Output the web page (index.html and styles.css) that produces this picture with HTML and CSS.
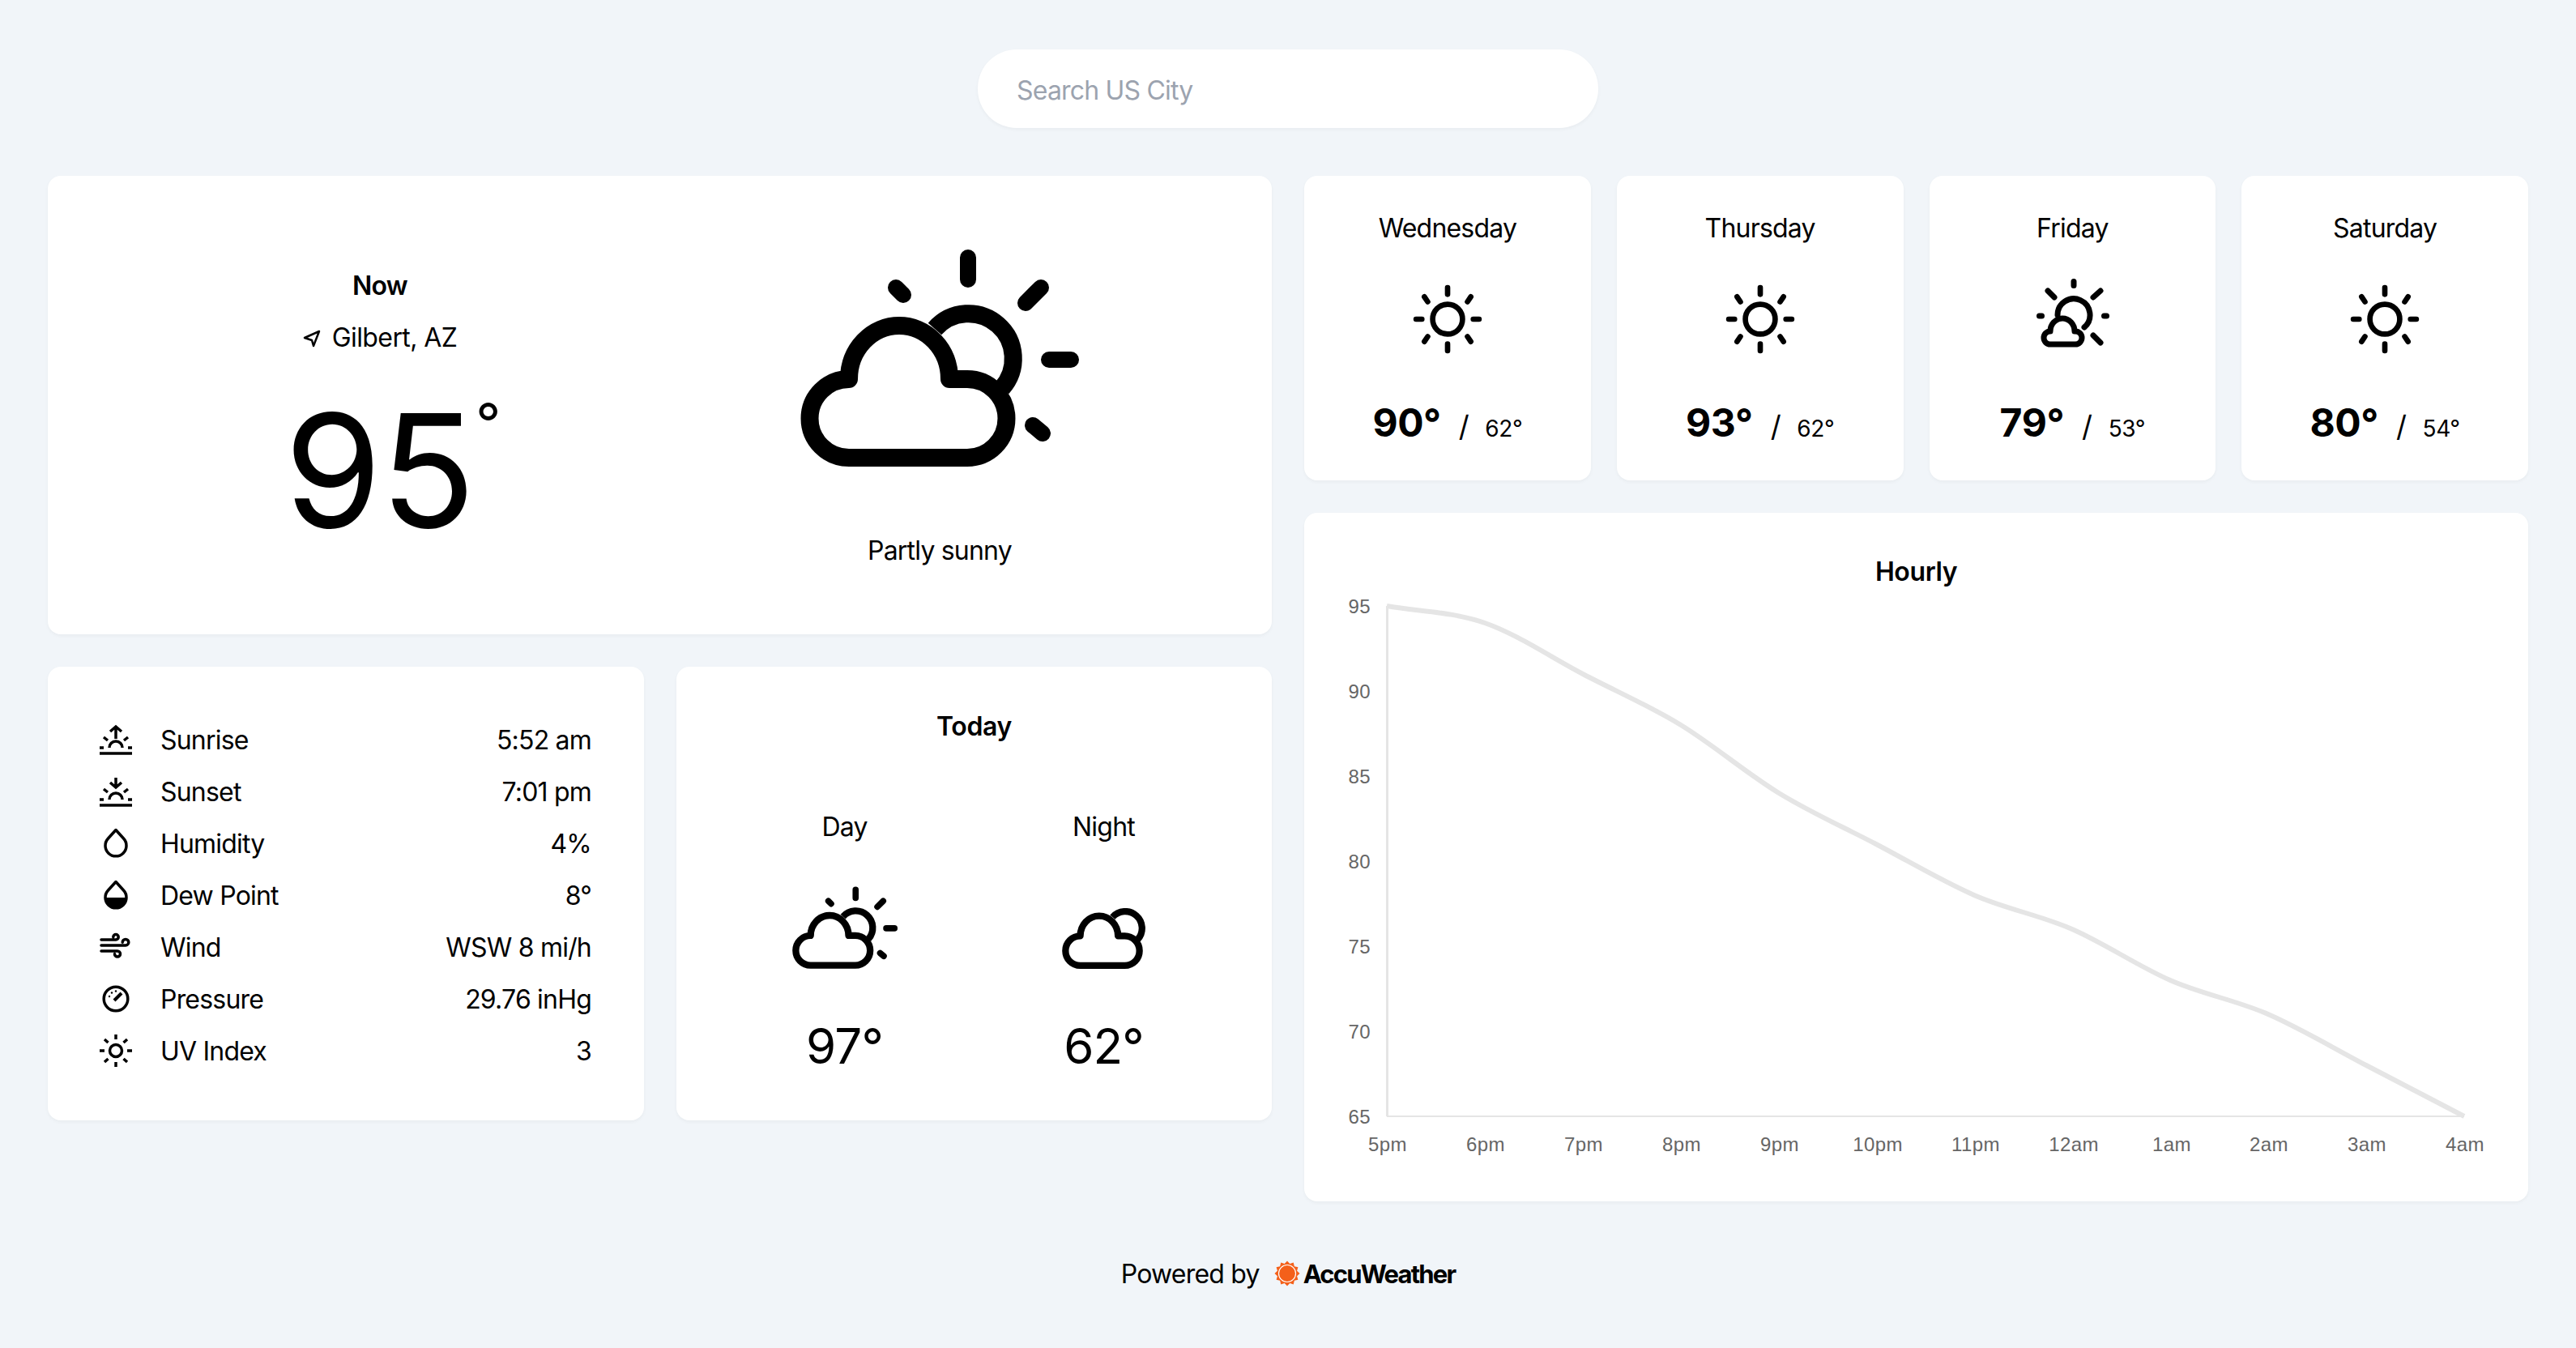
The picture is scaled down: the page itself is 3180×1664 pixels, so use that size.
FILE: index.html
```html
<!DOCTYPE html>
<html lang="en">
<head>
  <meta charset="UTF-8" />
  <title>Weather</title>
  <link rel="stylesheet" href="styles.css">
</head>
<body>
  <svg class="sprites" width="0" height="0">
    <symbol id="cloud-sun" viewBox="0 0 344 270">
      <g fill="none" stroke="#000" stroke-width="22" stroke-linecap="round" stroke-linejoin="round">
        <path d="M166 98A55 55 0 1 1 249 171" stroke-linecap="butt"/>
        <path d="M60 257a48.5 48.5 0 0 1 0-97A62 66 0 0 1 184 160h22a48.5 48.5 0 0 1 0 97z" fill="#fff"/>
      </g>
      <g fill="none" stroke="#000" stroke-width="20" stroke-linecap="round">
        <path d="M207 10V37M278 66l19-19M118 47l9 9M307 136h27M287 217l12 10"/>
      </g>
    </symbol>
    <symbol id="night" viewBox="0 69 274 201">
      <g fill="none" stroke="#000" stroke-width="22" stroke-linejoin="round">
        <path d="M166 98A55 55 0 1 1 249 171"/>
        <path d="M60 257a48.5 48.5 0 0 1 0-97A62 66 0 0 1 184 160h22a48.5 48.5 0 0 1 0 97z" fill="#fff"/>
      </g>
    </symbol>
    <symbol id="sun" viewBox="0 0 86 86">
      <circle cx="43" cy="43" r="18" fill="none" stroke="#000" stroke-width="6.5"/>
      <path d="M43 5V13M43 73V81M5 43H12M74 43H81M15 16l4 6M71 16l-4 6M15 70l4-6M71 70l-4-6" stroke="#000" stroke-width="6.5" stroke-linecap="round"/>
    </symbol>
    <symbol id="sun-cloud" viewBox="0 0 95 87">
      <g fill="none" stroke="#000" stroke-width="7" stroke-linecap="round" stroke-linejoin="round">
        <path d="M49 5.500V10.500M6.500 48H9.500M86.500 48H89.500M17 17l8 8M82 17l-9 8M73 72l9 9"/>
        <path d="M29 47A20 20 0 1 1 62 62"/>
        <path d="M20 83a8 8 0 0 1 0-16A15 16 0 0 1 50 67h1a8 8 0 0 1 0 16z" fill="#fff"/>
      </g>
    </symbol>
  </svg>

  <div class="search">
    <input type="text" placeholder="Search US City">
  </div>

  <div class="dashboard">
    <div class="left-col">
      <div class="card now-card">
        <div class="now-left">
          <div class="now-title">Now</div>
          <div class="now-place">
            <svg width="22" height="24" viewBox="0 0 22 24"><path d="M20 4L2 12l9 3 2 7z" fill="none" stroke="#000" stroke-width="2.500" stroke-linejoin="round"/></svg>
            Gilbert, AZ
          </div>
          <div class="now-temp">95<span class="deg">°</span></div>
        </div>
        <div class="now-right">
          <svg class="now-icon"><use href="#cloud-sun"/></svg>
          <div class="now-text">Partly sunny</div>
        </div>
      </div>

      <div class="lower-row">
        <div class="card details-card">
          <div class="detail-row">
            <svg class="detail-icon" viewBox="0 -2 40 40"><path d="M0 35H40M0 28H5M35 28H40M5 15l5 4M35 15l-5 4M12 28a8 8 0 0 1 16 0M20 17V2M13 8l7-6 7 6" fill="none" stroke="#000" stroke-width="3.500"/></svg>
            <span class="detail-name">Sunrise</span><span class="detail-value">5:52 am</span>
          </div>
          <div class="detail-row">
            <svg class="detail-icon" viewBox="0 -2 40 40"><path d="M0 35H40M0 28H5M35 28H40M5 15l5 4M35 15l-5 4M12 28a8 8 0 0 1 16 0M20 1V13M13 7l7 6 7-6" fill="none" stroke="#000" stroke-width="3.500"/></svg>
            <span class="detail-name">Sunset</span><span class="detail-value">7:01 pm</span>
          </div>
          <div class="detail-row">
            <svg class="detail-icon" viewBox="0 0 40 40"><path d="M20 3.500L10.500 14A13 13 0 1 0 29.500 14Z" fill="none" stroke="#000" stroke-width="3.500" stroke-linejoin="round"/></svg>
            <span class="detail-name">Humidity</span><span class="detail-value">4%</span>
          </div>
          <div class="detail-row">
            <svg class="detail-icon" viewBox="0 0 40 40"><path d="M20 3.500L10.500 14A13 13 0 1 0 29.500 14Z" fill="none" stroke="#000" stroke-width="3.500" stroke-linejoin="round"/><path d="M7 23H33A13 13 0 0 1 7 23Z"/></svg>
            <span class="detail-name">Dew Point</span><span class="detail-value">8°</span>
          </div>
          <div class="detail-row">
            <svg class="detail-icon" viewBox="0 0 40 38"><path d="M2 10H20a3.200 3.200 0 1 0-3.200-3.200M2 17H32a3.800 3.800 0 1 0-3.800-3.800M2 24H22a3.500 3.500 0 1 1-3.500 3.500" fill="none" stroke="#000" stroke-width="3.500" stroke-linecap="round"/></svg>
            <span class="detail-name">Wind</span><span class="detail-value">WSW 8 mi/h</span>
          </div>
          <div class="detail-row">
            <svg class="detail-icon" viewBox="0 0 40 38"><circle cx="20" cy="19" r="14.800" fill="none" stroke="#000" stroke-width="3.500"/><path d="M18 21l9-9" stroke="#000" stroke-width="4"/><circle cx="12" cy="16" r="1.200"/><circle cx="15" cy="11.500" r="1.200"/><circle cx="20" cy="9.500" r="1.200"/></svg>
            <span class="detail-name">Pressure</span><span class="detail-value">29.76 inHg</span>
          </div>
          <div class="detail-row">
            <svg class="detail-icon" viewBox="0 0 40 40"><circle cx="20" cy="20" r="7.500" fill="none" stroke="#000" stroke-width="3.500"/><path d="M20 0V6M20 34V40M0 20H6M34 20H40M6 6l4.500 4M34 6l-4.500 4M6 34l4.500-4M34 34l-4.500-4" stroke="#000" stroke-width="3.500"/></svg>
            <span class="detail-name">UV Index</span><span class="detail-value">3</span>
          </div>
        </div>

        <div class="card today-card">
          <div class="card-title">Today</div>
          <div class="today-cols">
            <div class="today-col">
              <div class="today-label">Day</div>
              <div class="today-icon"><svg class="icon-day"><use href="#cloud-sun"/></svg></div>
              <div class="today-temp">97°</div>
            </div>
            <div class="today-col">
              <div class="today-label">Night</div>
              <div class="today-icon"><svg class="icon-night"><use href="#night"/></svg></div>
              <div class="today-temp">62°</div>
            </div>
          </div>
        </div>
      </div>
    </div>

    <div class="right-col">
      <div class="days">
        <div class="card day-card">
          <div class="day-name">Wednesday</div>
          <div class="day-icon"><svg class="icon-sun"><use href="#sun"/></svg></div>
          <div class="day-temps"><b>90°</b><i>/</i><small>62°</small></div>
        </div>
        <div class="card day-card">
          <div class="day-name">Thursday</div>
          <div class="day-icon"><svg class="icon-sun"><use href="#sun"/></svg></div>
          <div class="day-temps"><b>93°</b><i>/</i><small>62°</small></div>
        </div>
        <div class="card day-card">
          <div class="day-name">Friday</div>
          <div class="day-icon"><svg class="icon-suncloud"><use href="#sun-cloud"/></svg></div>
          <div class="day-temps"><b>79°</b><i>/</i><small>53°</small></div>
        </div>
        <div class="card day-card">
          <div class="day-name">Saturday</div>
          <div class="day-icon"><svg class="icon-sun"><use href="#sun"/></svg></div>
          <div class="day-temps"><b>80°</b><i>/</i><small>54°</small></div>
        </div>
      </div>

      <div class="card hourly-card">
        <div class="card-title">Hourly</div>
        <svg class="chart" viewBox="1610 729 1511 752">
          <path class="axis-y" d="M1712.500 748V1378"/>
          <path class="axis-x" d="M1712 1378H3042"/>
          <path class="line" d="M1712 748C1752 755 1793 755 1833 769S1914 811 1954 832S2035 870.500 2075 895S2156 954.500 2196 979S2276 1021 2316 1042S2397 1087.500 2437 1105S2518 1129.500 2558 1147S2639 1192.500 2679 1210S2760 1234.500 2800 1252S2881 1294 2921 1315S3002 1357 3042 1378"/>
          <g class="y-labels">
            <text x="1692" y="757">95</text>
            <text x="1692" y="862">90</text>
            <text x="1692" y="967">85</text>
            <text x="1692" y="1072">80</text>
            <text x="1692" y="1177">75</text>
            <text x="1692" y="1282">70</text>
            <text x="1692" y="1387">65</text>
          </g>
          <g class="x-labels">
            <text x="1713" y="1421">5pm</text>
            <text x="1834" y="1421">6pm</text>
            <text x="1955" y="1421">7pm</text>
            <text x="2076" y="1421">8pm</text>
            <text x="2197" y="1421">9pm</text>
            <text x="2318" y="1421">10pm</text>
            <text x="2439" y="1421">11pm</text>
            <text x="2560" y="1421">12am</text>
            <text x="2681" y="1421">1am</text>
            <text x="2801" y="1421">2am</text>
            <text x="2922" y="1421">3am</text>
            <text x="3043" y="1421">4am</text>
          </g>
        </svg>
      </div>
    </div>
  </div>

  <div class="footer">
    <span>Powered by</span>
    <svg class="logo" viewBox="-16 -16 32 32">
      <polygon fill="#f4601a" points="0,-15.500 3.240,-12.070 7.750,-13.420 8.840,-8.840 13.420,-7.750 12.070,-3.240 15.500,0 12.070,3.240 13.420,7.750 8.840,8.840 7.750,13.420 3.240,12.070 0,15.500 -3.240,12.070 -7.750,13.420 -8.840,8.840 -13.420,7.750 -12.070,3.240 -15.500,0 -12.070,-3.240 -13.420,-7.750 -8.840,-8.840 -7.750,-13.420 -3.240,-12.070"/>
      <circle r="10.500" fill="#f4601a" stroke="#fff" stroke-width="1.200"/>
    </svg>
    <span class="brand">AccuWeather</span>
  </div>
</body>
</html>
```

FILE: styles.css
```css
body {
  font-family: "Inter", "Liberation Sans", sans-serif;
  margin: 0;
  padding: 61px 59px 0;
  height: 1664px;
  box-sizing: border-box;
  background-color: #f1f5f9;
  color: #000;
  font-size: 32px;
  letter-spacing: -0.8px;
  overflow: hidden;
}
.sprites {
  position: absolute;
}
.card {
  background-color: #fff;
  border-radius: 16px;
  box-shadow: 0 2px 4px rgba(0,0,0,0.04);
}
.card-title {
  font-weight: 600;
  text-align: center;
  line-height: 46px;
  letter-spacing: -0.4px;
}

.search {
  width: 766px;
  margin: 0 auto 59px;
}
.search input {
  display: block;
  box-sizing: border-box;
  width: 100%;
  height: 97px;
  padding: 3px 48px 0;
  border: none;
  border-radius: 48px;
  background: #fff;
  font-family: inherit;
  font-size: 32px;
  letter-spacing: -0.8px;
  box-shadow: 0 2px 4px rgba(0,0,0,0.04);
}
.search input::placeholder {
  color: #9ca3af;
}

.dashboard {
  display: grid;
  grid-template-columns: 1511px 1511px;
  column-gap: 40px;
}
.left-col, .right-col {
  display: flex;
  flex-direction: column;
  gap: 40px;
}

.now-card {
  height: 566px;
  display: grid;
  grid-template-columns: 691px 820px;
}
.now-left, .now-right {
  display: flex;
  flex-direction: column;
  align-items: center;
}
.now-left {
  padding-left: 129px;
}
.now-title {
  font-weight: 600;
  margin-top: 113px;
  line-height: 46px;
}
.now-place {
  margin-top: 18px;
  line-height: 46px;
  display: flex;
  align-items: center;
  gap: 14px;
  letter-spacing: -0.6px;
}
.now-temp {
  font-size: 194px;
  line-height: 240px;
  margin-top: 21px;
  margin-left: 29px;
  letter-spacing: -2px;
  display: flex;
}
.deg {
  font-size: 68px;
  line-height: 96px;
  margin-top: 13px;
  margin-left: 2px;
}
.now-icon {
  width: 344px;
  height: 270px;
  margin-top: 91px;
}
.now-text {
  margin-top: 79px;
  line-height: 46px;
}

.lower-row {
  display: grid;
  grid-template-columns: 736px 735px;
  column-gap: 40px;
}
.details-card {
  height: 560px;
  box-sizing: border-box;
  padding: 58px 65px 0 64px;
}
.detail-row {
  display: flex;
  align-items: center;
  height: 64px;
}
.detail-icon {
  width: 40px;
  height: 40px;
  margin-right: 35px;
  flex: none;
}
.detail-name {
  flex: 1;
}

.today-card {
  height: 560px;
  padding-top: 51px;
  box-sizing: border-box;
}
.today-cols {
  display: grid;
  grid-template-columns: 320px 320px;
  column-gap: 0;
  justify-content: center;
  margin-top: 78px;
}
.today-col {
  display: flex;
  flex-direction: column;
  align-items: center;
}
.today-label {
  line-height: 46px;
}
.today-icon {
  height: 103px;
  margin-top: 50px;
  display: flex;
  align-items: flex-end;
}
.icon-day {
  width: 130px;
  height: 103px;
}
.icon-night {
  width: 103px;
  height: 76px;
}
.today-temp {
  font-size: 60px;
  line-height: 70px;
  margin-top: 59px;
}

.days {
  display: grid;
  grid-template-columns: repeat(4, 1fr);
  column-gap: 32px;
}
.day-card {
  height: 376px;
  display: flex;
  flex-direction: column;
  align-items: center;
}
.day-name {
  margin-top: 42px;
  line-height: 46px;
}
.day-icon {
  height: 96px;
  margin-top: 41px;
  display: flex;
  align-items: center;
}
.icon-sun {
  width: 88px;
  height: 88px;
}
.icon-suncloud {
  width: 95px;
  height: 87px;
  margin-bottom: 18px;
}
.day-temps {
  margin-top: 50px;
  line-height: 60px;
  letter-spacing: -0.4px;
  display: flex;
  align-items: baseline;
}
.day-temps b {
  font-size: 48px;
  font-weight: 700;
}
.day-temps i {
  font-style: normal;
  font-size: 36px;
  margin: 0 20px 0 22px;
}
.day-temps small {
  font-size: 28px;
}

.hourly-card {
  height: 850px;
  padding-top: 50px;
  box-sizing: border-box;
}
.chart {
  display: block;
  width: 1511px;
  height: 752px;
}
.chart text {
  font-family: "Liberation Sans", sans-serif;
  font-size: 24px;
  letter-spacing: 0.4px;
  fill: #666;
}
.axis-y {
  stroke: #e5e5e5;
  stroke-width: 3;
  fill: none;
}
.axis-x {
  stroke: #e5e5e5;
  stroke-width: 2;
  fill: none;
}
.line {
  stroke: #e5e5e5;
  stroke-width: 6;
  fill: none;
}
.y-labels {
  text-anchor: end;
}
.x-labels {
  text-anchor: middle;
}

.footer {
  display: flex;
  align-items: center;
  justify-content: center;
  margin-top: 66px;
  height: 46px;
}
.logo {
  width: 32px;
  height: 32px;
  margin: 0 4px 0 18px;
}
.brand {
  font-weight: 700;
  font-size: 31px;
  letter-spacing: -1.8px;
}
```
